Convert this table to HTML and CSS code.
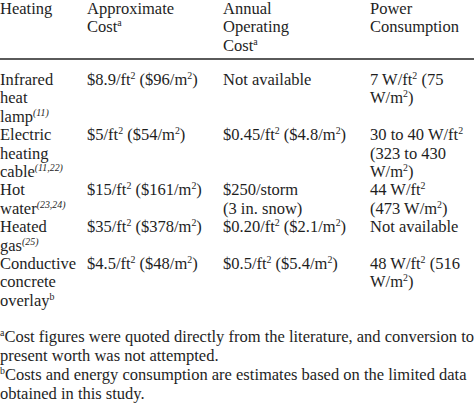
FILE: index.html
```html
<!DOCTYPE html>
<html>
<head>
<meta charset="utf-8">
<link rel="stylesheet" href="styles.css">
</head>
<body>
<div class="page">
  <div class="table">
    <div class="head">
      <div class="cell">Heating</div>
      <div class="cell">Approximate<br>Cost<sup>a</sup></div>
      <div class="cell">Annual<br>Operating<br>Cost<sup>a</sup></div>
      <div class="cell">Power<br>Consumption</div>
    </div>
    <div class="body">
      <div class="row">
        <div class="cell">Infrared<br>heat<br>lamp<sup class="ref">(11)</sup></div>
        <div class="cell">$8.9/ft<sup>2</sup> ($96/m<sup>2</sup>)</div>
        <div class="cell">Not available</div>
        <div class="cell">7 W/ft<sup>2</sup> (75<br>W/m<sup>2</sup>)</div>
      </div>
      <div class="row">
        <div class="cell">Electric<br>heating<br>cable<sup class="ref">(11,22)</sup></div>
        <div class="cell">$5/ft<sup>2</sup> ($54/m<sup>2</sup>)</div>
        <div class="cell">$0.45/ft<sup>2</sup> ($4.8/m<sup>2</sup>)</div>
        <div class="cell">30 to 40 W/ft<sup>2</sup><br>(323 to 430<br>W/m<sup>2</sup>)</div>
      </div>
      <div class="row">
        <div class="cell">Hot<br>water<sup class="ref">(23,24)</sup></div>
        <div class="cell">$15/ft<sup>2</sup> ($161/m<sup>2</sup>)</div>
        <div class="cell">$250/storm<br>(3 in. snow)</div>
        <div class="cell">44 W/ft<sup>2</sup><br>(473 W/m<sup>2</sup>)</div>
      </div>
      <div class="row">
        <div class="cell">Heated<br>gas<sup class="ref">(25)</sup></div>
        <div class="cell">$35/ft<sup>2</sup> ($378/m<sup>2</sup>)</div>
        <div class="cell">$0.20/ft<sup>2</sup> ($2.1/m<sup>2</sup>)</div>
        <div class="cell">Not available</div>
      </div>
      <div class="row">
        <div class="cell">Conductive<br>concrete<br>overlay<sup>b</sup></div>
        <div class="cell">$4.5/ft<sup>2</sup> ($48/m<sup>2</sup>)</div>
        <div class="cell">$0.5/ft<sup>2</sup> ($5.4/m<sup>2</sup>)</div>
        <div class="cell">48 W/ft<sup>2</sup> (516<br>W/m<sup>2</sup>)</div>
      </div>
    </div>
  </div>
  <div class="notes">
    <p class="note"><sup>a</sup>Cost figures were quoted directly from the literature, and conversion to<br>present worth was not attempted.</p>
    <p class="note"><sup>b</sup>Costs and energy consumption are estimates based on the limited data<br>obtained in this study.</p>
  </div>
</div>
</body>
</html>
```

FILE: styles.css
```css
html, body {
  margin: 0;
  padding: 0;
  background: #ffffff;
  overflow: hidden;
}
.page {
  width: 474px;
  height: 404px;
  overflow: hidden;
  font-family: "Liberation Serif", "Times New Roman", serif;
  font-size: 16.5px;
  color: #1e1e1e;
}
.head, .row {
  display: grid;
  grid-template-columns: 87px 136px 147px 1fr;
}
.head {
  line-height: 18.4px;
  padding-bottom: 2.8px;
  border-bottom: 2px solid #5a5a5a;
}
.body {
  padding-top: 11px;
  line-height: 18.4px;
}
.cell {
  white-space: nowrap;
}
sup {
  font-size: 0.6em;
  line-height: 0;
  vertical-align: 0.6em;
}
sup.ref {
  font-style: italic;
}
.notes {
  margin-top: 17px;
  line-height: 19px;
}
.note {
  margin: 0;
  white-space: nowrap;
}
```
